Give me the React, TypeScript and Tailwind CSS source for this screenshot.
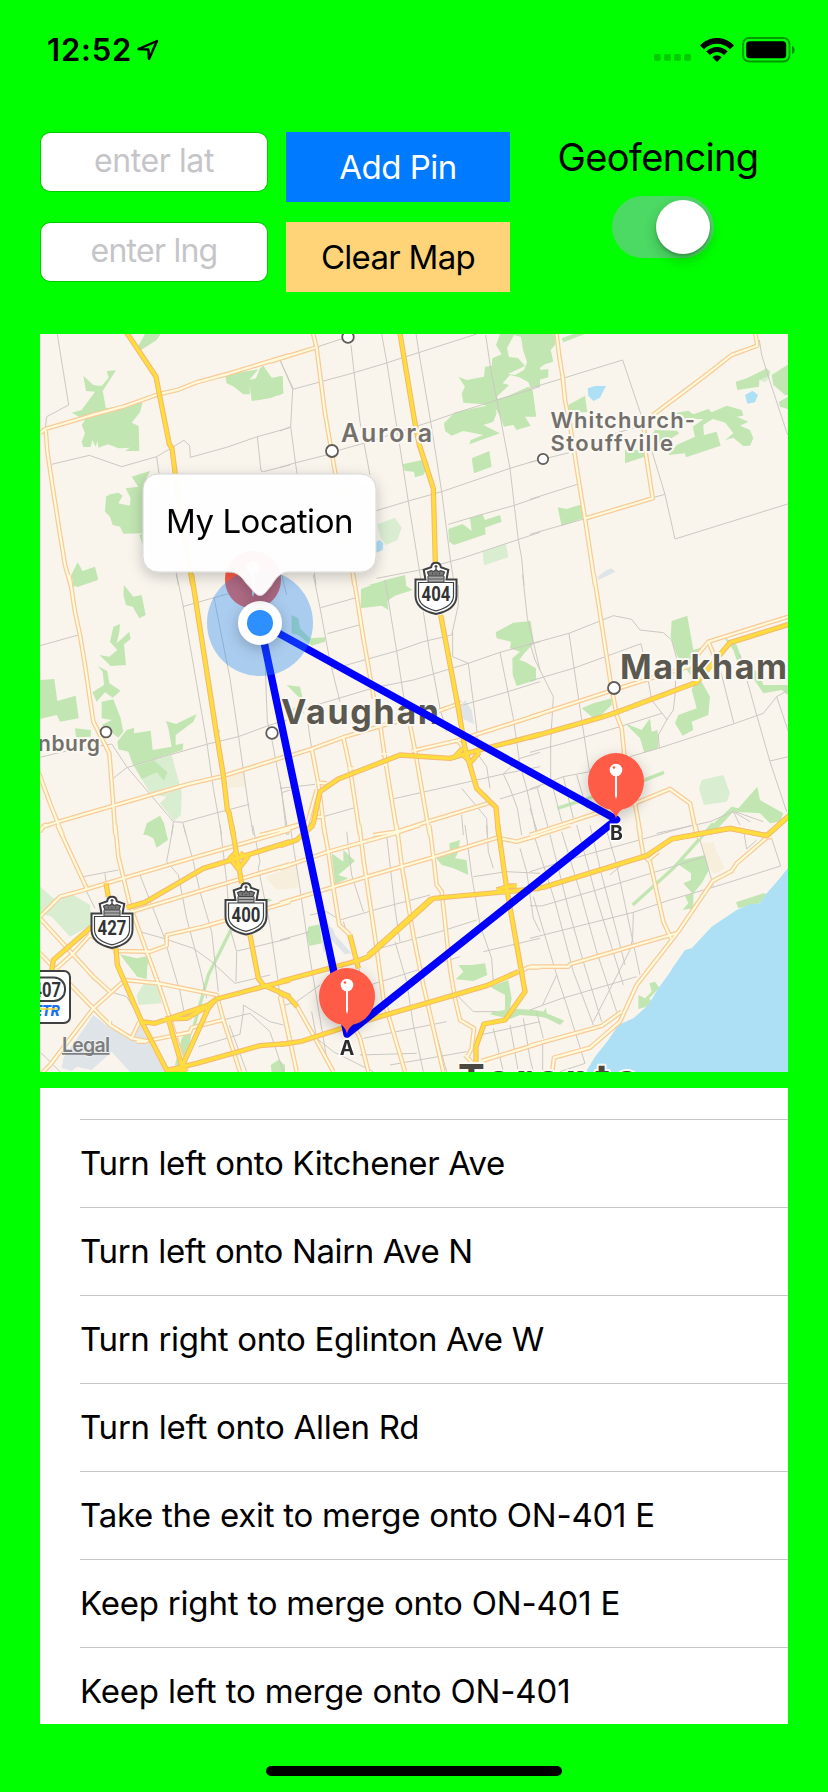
import React from "react";

type Tile = {
  x: number;
  y: number;
  park: string;
  light?: string;
  trail?: string;
  grey?: string;
  sand?: string;
  lake?: string;
  minor: string;
  road: string;
  hwy: string;
};

// The map is stored as nine sheets, each drawn at three units per pixel.
const tiles: Tile[] = [
  {
    x: 30, y: 325,
    park: "M332 76L325 62 345 27H392L380 45ZM230 138L258 136 218 198 228 250 338 232 330 262 305 293 326 303 328 378H285L300 368 265 370 235 358 205 368 203 347 197 365 187 345 182 366H160L155 350 165 325 155 300 165 285 125 263 155 255 195 200 168 198 160 152 190 180 215 183 236 158ZM585 150L640 140 685 133 658 165 660 208H640L612 185 590 175ZM690 130L700 122 725 158 757 153 760 205 720 220 665 228 657 165 678 160ZM305 455L360 438 345 470 340 490V625L280 626 270 605 248 600 240 575 225 560 228 515 240 508 265 503 278 512 265 535 300 542 302 520 287 490 325 485ZM328 630L340 625V665ZM125 747L143 712 158 738 195 725 204 762 130 785Z",
    minor: "M82 28L116 240 50 275 46 310M65 418L178 391 275 425 380 395 462 346 479 362 481 397 590 367 682 335 780 308M682 335L693 438 700 440 780 420M380 395L387 445 445 780M750 105L790 192",
    road: "M30 325L45 312 128 288 180 272 280 245 385 208 445 194 500 172 600 145 780 90M47 315L52 380 70 500 92 640 105 720 122 780",
    hwy: "M288 20L378 155 388 208 418 358 426 370 440 480 488 780",
  },
  {
    x: 280, y: 325,
    park: "M660 27H780V185L752 187 745 172 718 157 690 150 668 175 688 180 650 215 655 222 685 212 745 185 758 195 768 275 735 275 752 302 710 315 700 300 672 305 660 275 650 255 628 250 610 238 550 233 545 205 555 185 535 155 560 165 612 155 615 125 635 122 637 100 630 103 665 88 648 60ZM492 295L525 262 642 238 650 265 640 290 610 300 660 325 568 358 572 345 610 330 550 318 515 332 495 318ZM575 400L628 378 635 425 582 445ZM367 418L440 402 447 420 430 450 405 457 402 440 375 438ZM505 612L548 597 575 618 570 580 607 566 615 585 660 570 665 590 615 608 617 628 522 660 507 650ZM-5 155L8 153 10 205-5 212ZM265 780L375 752 378 780Z",
    light: "M292 598L345 578 365 608 352 645 318 660 302 640ZM608 680L678 657 685 697 612 721ZM728 85L745 70 780 60V100L730 115Z",
    lake: "M270 660L300 645 310 655 308 675 285 685Z",
    minor: "M105 68L190 40M0 105L38 193 32 305 48 425 52 450M38 193L205 148 300 120 425 80 590 27M213 60L222 140 240 290 270 450M305 27L320 110 365 400 385 530 418 735M408 27L418 90 452 290 485 500 512 710 520 760M0 318L32 305M0 427L48 413 140 390 175 376 255 354 452 290 540 260 645 227 780 185M230 575L385 528 485 500 690 430 780 403M617 30L635 150 652 230 690 430 715 645 725 700 732 780M505 598L600 570 700 542 780 515M290 760L420 735 545 700 780 622M100 720L108 780M418 735L425 780",
    road: "M98 20L110 70 135 265 165 440 215 720 223 780M-30 110L105 68",
    hwy: "M359 20L405 295 418 360 460 490 466 715",
  },
  {
    x: 530, y: 325,
    park: "M-10 27H75V60L62 75 70 110 45 118 20 135 55 133V157L25 165 30 180 0 188ZM95 40L130 27H165L100 52ZM0 195L8 200 18 272 0 275ZM115 240L165 212 172 262 120 262ZM617 170L650 160 710 130 720 140 718 152 688 165 687 185 622 195ZM725 150L775 118V210H765L730 180ZM747 230L775 215V252L750 245ZM285 375H345V395L285 415ZM375 315L440 317 448 325 405 352 370 375 365 330ZM430 265L475 257 490 268 535 252 545 262 590 242 635 255 640 272 620 275 655 290 630 302 660 315 670 340 660 362 640 363 610 338 585 345 610 325 585 292 548 282 520 300 522 330 560 320 572 362 468 397 465 385 415 390 440 360 495 335 488 305 520 283 440 280ZM83 547L110 552 155 538 158 580 95 603Z",
    light: "M688 165L712 140 720 158 705 172ZM35 95L60 65 65 90 45 100ZM563 285L590 270 625 300 600 300Z",
    lake: "M173 190L195 183 228 183 210 218 190 228 175 212ZM645 210L668 197 684 210 675 232 652 236Z",
    grey: "M203 755L230 735 245 730 256 740 205 765Z",
    minor: "M0 190L105 158 278 105 330 260 405 508 435 642 773 537M688 45L695 90 715 155 773 330M0 412L130 380M0 523L142 478M0 628L168 580M368 518L405 508M240 330L340 300",
    road: "M79 20L88 95 98 155 105 225 120 300 150 490 168 600 195 780M675 20L682 62 605 90 515 160 375 265 342 300 345 370 368 520 168 580",
    hwy: "",
  },
  {
    x: 30, y: 575,
    park: "M130-4H200L204 15 140 37ZM282 30L310 65 335 60 347 120 328 130 308 95 288 90 280 60ZM250 155L270 147 268 170 260 205 298 170 302 192 282 208 288 270 242 273 208 240 238 245 262 225 240 200ZM203 273L232 288 238 325 272 347 248 368 225 352 200 380 187 352 222 330 218 290ZM215 380L250 373 272 430 280 470 265 488 215 450 245 435 215 430ZM30 315L73 312 82 378 137 362 146 430 90 440 80 420 30 432ZM135 460L183 465 182 485 138 487ZM262 500L290 465 312 458V475L362 467 368 525 425 515 415 460 408 438 438 447 500 417 490 440 437 480V510L460 505 458 525 310 573 295 530 265 523ZM315 574L372 556 412 592 402 617 380 592 335 612ZM340 780L350 745 390 722 402 745 400 780Z",
    light: "M310 573L425 540 455 650 453 720 432 738 390 685 410 665 365 660Z",
    sand: "M595 605L645 588 648 632 597 640Z",
    minor: "M30 212L145 180M440 0L460 95 530 500 550 640 575 780M458 95L552 68 600 55M552 68L600 310 625 480 655 690 670 780M705 250L712 440 725 490 755 650 770 780M30 547L100 530 245 507 290 575 430 740 458 742 562 713 658 688M250 610L290 578 400 545 530 508 625 485 720 450 780 432M430 740L425 780M458 742L468 780M755 0L770 60M755 653L780 645M565 480L568 465",
    road: "M118 0L135 110 150 180 165 270 178 360 190 440 238 535 250 690 256 780M25 590L62 690 98 780M30 770L40 755 80 742 250 692 480 626 580 603 750 550 780 540M690 780L780 758",
    hwy: "M485 0L560 480 580 600 592 705 597 712 610 780",
  },
  {
    x: 280, y: 575,
    park: "M35 120L55 130 60 160 90 190 137 187 135 200 95 212 55 180 35 175ZM243 42L315 15 375 0 378 32 398 45 345 62 322 78 325 105 305 92 242 100ZM20 330L60 335 68 368 55 365ZM30 405L70 385 72 415 45 420ZM647 172L700 143 752 138 762 205 733 235 718 255 735 260 768 280V315L710 333 698 300 697 250 720 230 690 220 693 200 650 190Z",
    grey: "M540 395L555 375 575 405 582 447 545 430Z",
    minor: "M100 0L120 98 150 260 180 380M122 98L232 67M142 176L238 150M315 15L350 228 372 370M155 283L270 250 350 228 430 200 515 180 535 90V30M430 110L450 240 480 400 500 470M75 400L283 338 400 315 565 265 660 232 780 200M518 170V245L565 265 590 460 595 540 620 575 630 640M728 0L742 130 762 210 780 285M660 232L700 430 720 570 740 640 770 780M550 390L700 345 780 320M0 640L105 628M130 725L225 698M338 672L480 640 670 597 780 575M545 720L550 780M545 640L620 730 622 780M670 597L690 640 712 700 725 780M660 672L780 635M80 420L95 520M0 620L25 780M670 597L720 550 780 532",
    road: "M220 0L250 190 282 370M300 445L312 530 320 580 352 780M390 450L405 525 442 740 450 780M190 487L210 580 240 780M95 520L115 625 135 780M30 542L95 522 190 487 305 452 350 440M475 408L545 383M395 528L530 497 780 418M110 645L85 735 80 760M0 765L80 742M280 780L350 770 442 740 630 683M110 622L140 625M95 728L125 725M305 537H320M205 580H220M312 570H322M530 495L545 510",
    hwy: "M482 120L535 400 555 520 590 640 648 697 656 780M70 780L100 745 120 650 175 612 360 540 510 550 560 535 780 478M520 550L548 520M548 538L572 562 598 532",
  },
  {
    x: 530, y: 575,
    park: "M425 138L472 122 490 225 515 217 490 250 515 320 540 365 535 420 485 440 490 465 458 482 435 445 445 420 500 400 485 345 495 320 440 240 422 185ZM580 185L620 210 635 250 690 300 700 330 775 330V362L755 345 700 355 670 310 620 255 610 225ZM155 400L190 385 245 370V390L205 428 185 425ZM285 445L335 465 360 430 365 470 383 465 385 520 343 533 330 490ZM0 140L10 200 0 210ZM0 270L18 300 15 318 0 320ZM535 760L605 695 625 700 682 635 690 675 760 715 750 740 720 745 690 715 610 710 545 780Z",
    light: "M507 640L515 615 580 600 600 655 590 680 522 690Z",
    trail: "M82 700L200 662M340 617L402 592",
    minor: "M0 207L117 175 250 122 305 133 330 165 400 173 425 195 440 250 435 360 430 405 410 435 385 480 388 520M0 318L130 280 240 240 333 206 345 260 365 375 412 435M117 175L150 400 180 600M0 205L15 255 70 365 62 500V610M0 532L100 505 270 455 395 415M300 545L385 520 610 447 700 415 740 365 775 345M570 280L612 447M630 240L680 420 720 560 770 710M740 365L775 470M720 558L775 545M0 642L100 605 180 590M22 640L55 760M62 610L95 740M100 605L130 730M140 600L170 700M0 700L25 780M380 775L540 740 610 710 660 740M610 710L630 750M615 710L700 740",
    road: "M192 0L240 310 260 420 275 460 285 560M315 685L332 780M0 427L250 345 420 292 475 275 535 200 775 125M535 200L560 260M0 780L200 715 315 685 420 642 480 685 500 780",
    hwy: "M0 487L210 428 260 412 500 322 600 203 780 147M425 792L600 760 710 782 780 720",
  },
  {
    x: 30, y: 825,
    park: "M340 25L375 0 402-5 414 45 380 68 370 40ZM270 388L320 400 358 392 352 425 350 462 322 455 290 415ZM490 600L455 640 435 720 460 740 480 650ZM722 720L745 705 765 720V742H725ZM690 228L715 220 728 226 700 235Z",
    light: "M30 185L70 220 130 210 180 240 185 300 120 335 65 275 30 265ZM320 510L345 470 385 480 395 535 325 540Z",
    trail: "M610 300L535 450 490 610",
    grey: "M100 700L190 570 240 610 300 630 325 590 350 640 405 741H300L245 680 185 735 140 725 125 738 95 728Z",
    sand: "M705 155L780 130V190L740 195Z",
    minor: "M570 0L590 170 600 310 620 380 618 470M668 0L690 110 685 130 720 300 750 510M430 0L410 110 445 150 470 280 510 430 530 520M330 150L400 330 450 500 462 560M160 155L265 135M225 145L228 175M330 320L400 340 490 370 545 410 615 475 720 450M622 378L780 340M505 665L630 628 640 560V540L720 590 760 600M30 680L90 740M460 0L490 110 510 200 545 320 565 500M240 500L290 515 330 580M578 585L660 565 720 620 760 740M160 180L195 250M598 600L650 740",
    road: "M25 20L45 0H60M82 0L170 190M256 0L265 95 300 240 350 380 385 475 420 580 450 680 470 740M30 275L90 215 170 193 280 160 500 95 780 15M300 262L520 195 780 118M30 280L190 455 240 500M250 378L360 380 410 362V330L520 305 780 230M180 330L130 385 80 430M180 330L260 375M25 380L190 550 240 600 305 640 350 648 480 622 485 608 578 585M285 465L190 550 60 720 35 745M285 465L385 475 560 510 580 585 630 740M305 640L328 590M750 515L780 650M240 600V588M320 650H350",
    hwy: "M605 0L622 100 635 175M290 248L345 232 520 130 620 100 780 50M660 330L685 460 700 480 780 515M228 175L235 215M185 305L70 405 65 440M258 370L262 420 335 590 410 735 470 735M335 590L375 595 535 540 560 522 700 485 780 465M405 582L470 580 540 540M458 720L535 550 555 525M415 582L455 720 465 740M415 735L500 715 690 662 780 655M622 78L600 100 625 132 652 98 630 84",
  },
  {
    x: 280, y: 825,
    park: "M155 85L190 110V75L225 108 175 150 205 160 165 178ZM468 98L510 85 508 55 540 45 535 80 525 100 560 105 565 150 520 130 485 120ZM85 305L120 298 125 355 88 363 80 330ZM527 463L550 440 535 420 575 420 615 415 622 450 580 468ZM630 485L685 465 695 520 690 550 760 555 790 560V575L720 570 690 582 630 568 640 560 675 555V510ZM0 705L15 741H0Z",
    grey: "M130 280L160 315 165 330 215 385 195 388 150 340 130 385 125 340Z",
    sand: "M0 125L50 120 55 190 0 190Z",
    minor: "M30 0L60 190 90 400 140 700M190 290L225 400 240 440M345 350L380 470 400 600 430 740M555 0L575 150 600 300 635 400 640 470M620 0L625 80 640 130M720 70L740 140 760 280 780 320M0 345L90 320M180 285L300 250 450 210M300 370L480 320 590 285M580 155L680 140 780 145M610 380L780 340M270 480L540 395M640 610L670 740M690 600L715 740M730 580L750 700M770 560L790 640M600 630L780 590M240 690L410 685M330 720L560 680M530 510L580 560 650 560M0 545L50 530 120 480M95 560L110 640 160 680 280 740M250 640L500 590M450 560L500 740M200 20L215 150 250 260M320 30L345 250 360 350M90 270L140 260 180 285",
    road: "M130 0L145 80 160 190 178 300 210 330M238 0L250 100 290 370 310 520 375 740M350 0L365 120 400 330 430 480 490 740M448 0L462 110 470 180 485 200 510 430 525 520 540 585 582 610 575 670 560 700M0 130L145 80 345 25 420 0M0 235L260 155 460 97 650 38 710 50 780 30M0 500L20 600 50 740M52 545L100 630 160 740M215 590L240 640 265 740M0 20L60 0M605 708L780 655M720 440L745 427 780 427M555 690L575 712",
    hwy: "M0 62L50 45 100 0M0 470L240 405 265 395 460 220 700 198 780 190M265 390L455 220M653 0L680 190 735 500 675 585 612 597 588 665V710M0 658L60 650 200 605 300 575 620 482 715 440M0 505L25 515 52 545M210 330L235 430M650 195L690 183 710 183",
  },
  {
    x: 530, y: 825,
    park: "M618 232L700 205 710 207 690 235 625 250ZM325 510L345 520 365 500 358 475 375 470 388 488 358 520 370 540 325 552ZM455 105L525 90 537 135 515 175 490 205V250L457 255 475 235 465 213 487 205 460 175 483 165V145L440 115ZM0 553L40 560 48 548 50 565 103 587 90 600 50 580 0 567Z",
    trail: "M308 240L430 130 550-5",
    sand: "M515 55L550 50 560 80 582 125 580 133 550 148 530 115Z",
    lake: "M780 122L745 165 710 205 690 235 660 238 620 255 575 285 545 305 485 370 465 375 430 425 418 445 385 490 355 540 310 580 265 600 235 645 195 695 165 745H780Z",
    minor: "M0 140L130 100 490 0M0 242L35 243 200 195 525 95M0 340L310 262 420 225 555 185 752 123 725 40M0 555L40 540 90 522 320 455M10 215L80 450 110 540 165 715M15 40L75 230 130 440 190 600M60 30L115 250 160 410 215 590M95 20L150 200 200 380 260 560M140 0L200 220 240 350 280 480M180 0L215 150 260 320 285 420M225 0L260 120 330 450M310 262L308 340 300 375 190 590M80 450L38 540M38 650V741M0 700L10 741M510 45L545 165 550 185M90 740L165 715M640 10L650 72 680 45M240 150L275 120",
    road: "M0 38L120 0M325 0L340 90 360 110 400 290 425 345M355 105L385 80M495 0L508 40M725 35L710 38 620 115 605 138 548 168 445 320 320 480 270 590 180 668 72 698 66 745M0 425L115 425 120 418 440 325M0 662L215 603 275 560",
    hwy: "M0 190L40 187 350 92 425 42 600 10 710 32 780-30",
  },
];

type Layer = keyof Omit<Tile, "x" | "y">;

function Sheet({ layer, ...rest }: { layer: Layer } & React.SVGProps<SVGPathElement>) {
  return (
    <>
      {tiles.map((t) =>
        t[layer] ? (
          <path key={`${t.x}-${t.y}`} d={t[layer]} transform={`translate(${t.x} ${t.y}) scale(.33333)`} {...rest} />
        ) : null
      )}
    </>
  );
}

const line = { fill: "none", strokeLinejoin: "round" as const };

const towns = [
  [348, 337, 5.8],
  [332, 451, 6],
  [543, 459, 5.2],
  [106, 732, 5.4],
  [272, 733, 5.8],
  [614, 688, 6],
];

function Label({ x, y, w, size, color, weight, children }: { x: number; y: number; w: number; size: number; color: string; weight: number; children: string }) {
  return (
    <text x={x} y={y} textLength={w} fontSize={size} fontWeight={weight} fill={color} stroke="#fbf8f3" strokeWidth="4" strokeLinejoin="round" paintOrder="stroke">
      {children}
    </text>
  );
}

function Shield({ x, y, n }: { x: number; y: number; n: string }) {
  return (
    <g transform={`translate(${x} ${y})`}>
      <path d="M0 1.2c2.800 0 4.500 1 4.800 4.500l7.500 2.600-1.800 9.700H20.500v16C20.500 44 12 50 0 52.500-12 50-20.500 44-20.500 34V18H-10.500l-1.800-9.700 7.500-2.600C-4.500 2.200-2.800 1.200 0 1.200Z" fill="#fff" stroke="#3f4042" strokeWidth="2" />
      <path d="M-17.500 21H17.500V34C17.500 42 10 47 0 49.300-10 47-17.500 42-17.500 34Z" fill="none" stroke="#3f4042" strokeWidth="1.200" />
      <path d="M-8 14.500V20.500H8V14.500M-8 17.500H8" fill="#aaa" stroke="#555" strokeWidth="1.200" />
      <path d="M-7 14.500L-8.500 10.500-5 9.200-2 10 0 8 2 10 5 9.200 8.500 10.500 7 14.500Z" fill="#777" stroke="#444" strokeWidth="1.200" />
      <path d="M0 3.500V8M-1.500 5H1.500M-4 12H-3M3 12H4M0 12V13" stroke="#444" strokeWidth="1.300" />
      <text x="-14.400" y="39.500" textLength="28.800" lengthAdjust="spacingAndGlyphs" fontFamily="Roboto" fontWeight="700" fontSize="20.500" fill="#333">{n}</text>
    </g>
  );
}

function Pin({ x, y }: { x: number; y: number }) {
  return (
    <g transform={`translate(${x} ${y})`}>
      <path d="M0 37.500C-1 34-2.500 31-6 28.500-19 26-28 14.500-28 0A28 28 0 0 1 28 0C28 14.500 19 26 6 28.500 2.500 31 1 34 0 37.500Z" fill="#ff5b46" />
      <path d="M-1-6H1V15L0 18-1 15Z" fill="#fff" />
      <circle cy="-11" r="6.300" fill="#fff" />
      <circle cx="-2" cy="-13.500" r="1.300" fill="#ff5b46" />
    </g>
  );
}

function MapView() {
  return (
    <section className="relative h-[738px] w-[748px] overflow-hidden bg-[#f9f5ed]">
      <svg viewBox="40 334 748 738" className="block h-full w-full" fontFamily="Inter, sans-serif">
        <defs>
          <filter id="soft" x="-50%" y="-50%" width="200%" height="200%">
            <feDropShadow dx="0" dy="4" stdDeviation="7" floodColor="#000" floodOpacity=".22" />
          </filter>
        </defs>
        <Sheet layer="sand" fill="#f7eedc" />
        <Sheet layer="grey" fill="#dfe4e9" />
        <Sheet layer="light" fill="#d9edd1" />
        <Sheet layer="park" fill="#c2e6b2" />
        <path d="M514 335L521 337 523 350 527 362 524 370 515 375 508 374 525 366 518 358 509 357 507 348Z" fill="#f9f5ed" />
        <Sheet layer="trail" {...line} stroke="#c2e6b2" strokeWidth="10" />
        <Sheet layer="lake" fill="#ade0f4" />
        <Sheet layer="minor" {...line} stroke="#cbc8c2" strokeWidth="3" />
        <Sheet layer="road" {...line} stroke="#f8cb98" strokeWidth="14" />
        <Sheet layer="road" {...line} stroke="#fffadb" strokeWidth="6.500" />
        <Sheet layer="hwy" {...line} stroke="#f6b873" strokeWidth="16" />
        <Sheet layer="hwy" {...line} stroke="#ffdd3c" strokeWidth="10" />

        {towns.map(([x, y, r]) => (
          <circle key={`${x}`} cx={x} cy={y} r={r} fill="#fff" stroke="#5f5c57" strokeWidth="1.800" />
        ))}

        <Label x={341} y={442} w={91} size={25} weight={600} color="#73706b">Aurora</Label>
        <Label x={550.500} y={427.500} w={144.500} size={22} weight={600} color="#73706b">Whitchurch-</Label>
        <Label x={550.500} y={450.500} w={122.500} size={22} weight={600} color="#73706b">Stouffville</Label>
        <Label x={38} y={751} w={62} size={21} weight={600} color="#73706b">nburg</Label>
        <Label x={281} y={724} w={158} size={34} weight={700} color="#5b584f">Vaughan</Label>
        <Label x={620} y={679} w={167} size={34} weight={700} color="#5b584f">Markham</Label>
        <Label x={458} y={1092.500} w={181} size={40} weight={700} color="#4b4840">Toronto</Label>

        <Shield x={436} y={561.500} n="404" />
        <Shield x={246} y={882} n="400" />
        <Shield x={112} y={895.500} n="427" />
        <rect x="18" y="971" width="52" height="52" rx="6" fill="#fff" stroke="#3f4042" strokeWidth="2" />
        <rect x="20" y="977.500" width="45" height="23.500" rx="11" fill="#fff" stroke="#3f4042" strokeWidth="2" />
        <text x="32.500" y="996.500" textLength="28.500" lengthAdjust="spacingAndGlyphs" fontFamily="Roboto" fontWeight="700" fontSize="20.500" fill="#333">407</text>
        <text x="34" y="1016" textLength="26" lengthAdjust="spacingAndGlyphs" fontFamily="Roboto" fontWeight="900" fontStyle="italic" fontSize="15" fill="#1a6ff2">ETR</text>
        <path d="M38 1009H58" stroke="#ffd23c" strokeWidth="1.500" />

        <text x="62" y="1051.500" textLength="48" fontSize="19.500" fontWeight="600" fill="#7c7e81" stroke="#f2f2ef" strokeWidth="1.500" paintOrder="stroke">Legal</text>
        <path d="M62 1053.800H109.500" stroke="#7c7e81" strokeWidth="1.800" />

        <path d="M616.500 819.500L260 623 347 1034Z" {...line} stroke="#0000ff" strokeWidth="7.500" />

        <Pin x={253} y={579} />
        <circle cx="260" cy="623" r="53" fill="#1e86f5" fillOpacity=".36" />
        <g filter="url(#soft)">
          <Pin x={616} y={781} />
          <Pin x={347} y={996} />
          <circle cx="260" cy="623" r="22" fill="#fff" />
        </g>
        <circle cx="260" cy="623" r="13" fill="#2e90ff" />
        <text x="616.500" y="840" textAnchor="middle" fontSize="19.500" fontWeight="700" fill="#2c2c2c" stroke="#fff" strokeWidth="3" paintOrder="stroke">B</text>
        <text x="347" y="1054.500" textAnchor="middle" fontSize="19.500" fontWeight="700" fill="#2c2c2c" stroke="#fff" strokeWidth="3" paintOrder="stroke">A</text>

        <path
          d="M158 474H361A15 15 0 0 1 376 489V557A15 15 0 0 1 361 572H289C280 572 276 578 271 586L265 593Q260 598 255 593L246 583C241 576 237 572 229 572H158A15 15 0 0 1 143 557V489A15 15 0 0 1 158 474Z"
          fill="#fff" fillOpacity=".96" stroke="#d5d5d5" strokeWidth="1" filter="url(#soft)"
        />
      </svg>
      <div className="absolute left-[103px] top-[140px] flex h-[98px] w-[233px] items-center justify-center whitespace-nowrap pb-[2px] text-[33px] tracking-[-0.45px] text-black">
        My Location
      </div>
    </section>
  );
}

const steps = [
  ["Turn left onto Kitchener Ave", "tracking-[-0.33px]"],
  ["Turn left onto Nairn Ave N", "tracking-[-0.36px]"],
  ["Turn right onto Eglinton Ave W", "tracking-[-0.33px]"],
  ["Turn left onto Allen Rd", "tracking-[-0.25px]"],
  ["Take the exit to merge onto ON-401 E", "tracking-[-0.25px]"],
  ["Keep right to merge onto ON-401 E", "tracking-[-0.2px]"],
  ["Keep left to merge onto ON-401", "tracking-[-0.16px]"],
];

export default function App() {
  return (
    <main className="flex h-[1792px] w-[828px] flex-col items-center overflow-hidden bg-[#00ff00] font-['Inter',sans-serif] text-black">
      <header className="flex h-[132px] w-full items-start justify-between pl-[47px] pr-[32px] pt-[34px]">
        <div className="flex h-[32px] items-center gap-[5px]">
          <span className="text-[31px] font-semibold leading-[32px] tracking-[0.8px]">12:52</span>
          <svg viewBox="0 0 22 22" className="h-[22px] w-[22px]" fill="none" stroke="#000" strokeWidth="2.400" strokeLinejoin="round">
            <path d="M1.500 10L20 2 12 20 11.300 10.500Z" />
          </svg>
        </div>
        <div className="flex h-[32px] items-center">
          <div className="mt-[15px] flex gap-[3px]">
            {[0, 1, 2, 3].map((i) => (
              <i key={i} className="h-[7px] w-[7px] rounded-[2px] bg-black/20" />
            ))}
          </div>
          <svg viewBox="0 0 34 24" className="ml-[9px] h-[24px] w-[34px]">
            <path d="M0 7.500C9-2.500 25-2.500 34 7.500L30 11.200C23 3.800 11 3.800 4 11.200ZM6.300 13.500C12 7.500 22 7.500 27.700 13.500L24 17C20 13 14 13 10 17ZM12.300 19.200C15 16.800 19 16.800 21.700 19.200L17 24Z" />
          </svg>
          <svg viewBox="0 0 54 26" className="ml-[8px] h-[26px] w-[54px]">
            <rect x="1" y="1" width="46.500" height="23.500" rx="6" fill="none" stroke="#000" strokeOpacity=".4" strokeWidth="1.800" />
            <rect x="4.200" y="4.200" width="40" height="17" rx="3.500" />
            <path d="M50 9C53.500 10 53.500 16 50 17Z" fillOpacity=".45" />
          </svg>
        </div>
      </header>

      <section className="flex h-[202px] w-[748px]">
        <div className="flex w-[228px] flex-col gap-[30px]">
          {[
            ["enter lat", "tracking-[-0.4px]"],
            ["enter lng", "tracking-[-0.75px]"],
          ].map(([t, c]) => (
            <div key={t} className="flex h-[60px] items-center justify-center rounded-[10px] border border-black/20 bg-white bg-clip-padding pb-[2px] text-[32px] leading-none text-[#c5c5c8]">
              <span className={c}>{t}</span>
            </div>
          ))}
        </div>
        <div className="ml-[18px] flex w-[224px] flex-col gap-[20px]">
          <button className="h-[70px] bg-[#007aff] pt-[2px] text-[33px] tracking-[-0.5px] text-white">Add Pin</button>
          <button className="h-[70px] bg-[#ffd479] pt-[2px] text-[33px] tracking-[-0.7px]">Clear Map</button>
        </div>
        <div className="ml-[44px] flex w-[208px] flex-col items-center">
          <span className="mt-px text-[38px] leading-[48px] tracking-[-0.65px]">Geofencing</span>
          <div className="ml-[10px] mt-[15px] flex h-[62px] w-[102px] justify-end rounded-full bg-[#4cd964] p-[4px]">
            <i className="h-[54px] w-[54px] rounded-full bg-white shadow-[0_6px_14px_rgba(0,0,0,0.2),0_2px_3px_rgba(0,0,0,0.2)]" />
          </div>
        </div>
      </section>

      <MapView />

      <ul className="mt-[16px] h-[636px] w-[748px] overflow-hidden bg-white pl-[40px] pt-[31px]">
        {steps.map(([t, c]) => (
          <li key={t} className="flex h-[88px] items-center border-t border-[#c8c7cc] text-[33px]">
            <span className={c}>{t}</span>
          </li>
        ))}
      </ul>

      <div className="mt-[42px] h-[10px] w-[296px] rounded-full bg-black" />
    </main>
  );
}
